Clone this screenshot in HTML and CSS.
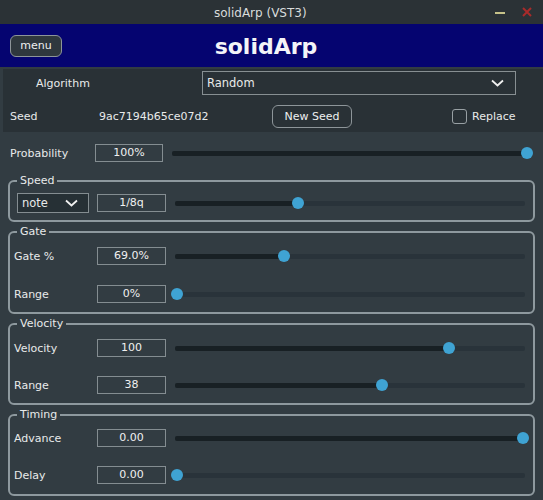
FILE: index.html
```html
<!DOCTYPE html>
<html>
<head>
<meta charset="utf-8">
<link rel="stylesheet" href="styles.css">
</head>
<body>
<div class="window">
  <div class="titlebar">
    <span class="title">solidArp (VST3)</span>
    <div class="winctl">
      <span class="min"></span>
      <svg class="close" width="10" height="10" viewBox="0 0 10 10"><path d="M1 1L9 9M9 1L1 9" stroke="#a82b2b" stroke-width="2" fill="none"/></svg>
    </div>
  </div>
  <div class="header">
    <button class="btn menu">menu</button>
    <div class="appname">solidArp</div>
    <div></div>
  </div>
  <div class="toppanel">
    <div class="algrow">
      <span class="alglabel">Algorithm</span>
      <div class="dropdown">
        <span>Random</span>
        <svg width="13" height="8" viewBox="0 0 13 8"><path d="M1 1.5L6.5 6.5L12 1.5" stroke="#f0f0f0" stroke-width="1.8" fill="none"/></svg>
      </div>
    </div>
    <div class="seedrow">
      <span class="seedlabel">Seed</span>
      <span class="seedhash">9ac7194b65ce07d2</span>
      <button class="btn newseed">New Seed</button>
      <span class="checkbox"></span>
      <span class="checklabel">Replace</span>
    </div>
  </div>
  <div class="main">
    <div class="probrow">
      <span class="problabel">Probability</span>
      <div class="valbox probbox">100%</div>
      <div class="slider probslider" style="--v:1"><div class="fill"></div><div class="thumb"></div></div>
    </div>
    <div class="groups">
      <div class="group speed">
        <span class="legend">Speed</span>
        <div class="row">
          <div class="combo"><span>note</span><svg width="13" height="8" viewBox="0 0 13 8"><path d="M1 1.5L6.5 6.5L12 1.5" stroke="#f0f0f0" stroke-width="1.8" fill="none"/></svg></div>
          <div class="valbox">1/8q</div>
          <div class="slider" style="--v:0.35"><div class="fill"></div><div class="thumb"></div></div>
        </div>
      </div>
      <div class="group gate">
        <span class="legend">Gate</span>
        <div class="row">
          <span class="lbl">Gate %</span>
          <div class="valbox">69.0%</div>
          <div class="slider" style="--v:0.31"><div class="fill"></div><div class="thumb"></div></div>
        </div>
        <div class="row">
          <span class="lbl">Range</span>
          <div class="valbox">0%</div>
          <div class="slider" style="--v:0"><div class="fill"></div><div class="thumb"></div></div>
        </div>
      </div>
      <div class="group vel">
        <span class="legend">Velocity</span>
        <div class="row">
          <span class="lbl">Velocity</span>
          <div class="valbox">100</div>
          <div class="slider" style="--v:0.786"><div class="fill"></div><div class="thumb"></div></div>
        </div>
        <div class="row">
          <span class="lbl">Range</span>
          <div class="valbox">38</div>
          <div class="slider" style="--v:0.592"><div class="fill"></div><div class="thumb"></div></div>
        </div>
      </div>
      <div class="group timing">
        <span class="legend">Timing</span>
        <div class="row">
          <span class="lbl">Advance</span>
          <div class="valbox">0.00</div>
          <div class="slider" style="--v:1"><div class="fill"></div><div class="thumb"></div></div>
        </div>
        <div class="row">
          <span class="lbl">Delay</span>
          <div class="valbox">0.00</div>
          <div class="slider" style="--v:0"><div class="fill"></div><div class="thumb"></div></div>
        </div>
      </div>
    </div>
  </div>
</div>
</body>
</html>
```
FILE: styles.css
```css
html, body {
  margin: 0;
  padding: 0;
  background: #323c42;
}
body {
  font-family: "DejaVu Sans", Verdana, sans-serif;
  font-size: 11px;
  color: #e8eaea;
}
.window {
  width: 543px;
  height: 500px;
  overflow: hidden;
  background: #323c42;
}
.titlebar {
  height: 24px;
  background: #2b3236;
  display: flex;
  align-items: center;
  padding-left: 214px;
  box-sizing: border-box;
}
.title {
  font-size: 12px;
  color: #d9dcdc;
  padding-top: 1px;
}
.winctl {
  margin-left: auto;
  display: flex;
  align-items: center;
  gap: 17px;
  padding-right: 11px;
}
.min {
  display: block;
  width: 10px;
  height: 2px;
  background: #c6c28a;
  margin-top: 2px;
}
.close { display: block; }
.header {
  height: 43px;
  background: #050470;
  display: grid;
  grid-template-columns: 52px 1fr 73px;
  align-items: center;
  padding-left: 10px;
}
.btn {
  font-family: "DejaVu Sans", Verdana, sans-serif;
  font-size: 11px;
  color: #eef0f0;
  border: 1px solid #8d9599;
  border-radius: 6px;
  padding: 0;
  box-sizing: border-box;
}
.menu {
  width: 52px;
  height: 22px;
  background: #2f383e;
}
.appname {
  text-align: center;
  font-size: 22px;
  font-weight: bold;
  color: #f4f4f8;
  padding-top: 2px;
}
.toppanel {
  margin-top: 2px;
  margin-left: 3px;
  height: 63px;
  box-sizing: border-box;
  background: #293136;
  padding-top: 2px;
}
.algrow {
  display: flex;
  align-items: center;
  height: 24px;
}
.alglabel {
  width: 166px;
  padding-left: 33px;
}
.dropdown {
  width: 314px;
  height: 24px;
  box-sizing: border-box;
  border: 1px solid #878f92;
  display: flex;
  align-items: center;
  justify-content: space-between;
  padding: 0 11px 0 4px;
}
.dropdown span { font-size: 11.5px; }
.seedrow {
  display: flex;
  align-items: center;
  height: 23px;
  margin-top: 10px;
  padding-left: 7px;
}
.seedlabel { width: 89px; }
.seedhash { width: 173px; }
.newseed {
  width: 80px;
  height: 23px;
  background: #293136;
}
.checkbox {
  width: 15px;
  height: 15px;
  box-sizing: border-box;
  border: 1px solid #98a0a4;
  border-radius: 3px;
  margin-left: 100px;
}
.checklabel { margin-left: 5px; }
.main {
  padding-top: 12px;
}
.probrow {
  display: flex;
  align-items: center;
  height: 18px;
  padding-left: 10px;
}
.problabel { width: 85px; }
.valbox {
  width: 69px;
  height: 18px;
  box-sizing: border-box;
  border: 1px solid #848d91;
  text-align: center;
  line-height: 16px;
  font-size: 11px;
  color: #f0f0f0;
  flex: none;
}
.probbox { width: 68px; }
.slider {
  position: relative;
  height: 12px;
  flex: 1;
}
.slider::before, .slider .fill {
  content: "";
  position: absolute;
  left: 0;
  top: 3.5px;
  height: 5px;
}
.slider::before {
  right: 0;
  background: #29333a;
  border-radius: 2px;
}
.slider .fill {
  width: calc(2px + var(--v) * (100% - 4px));
  background: #182024;
  border-radius: 2px;
}
.slider .thumb {
  position: absolute;
  top: 0;
  left: calc(2px + var(--v) * (100% - 4px) - 6px);
  width: 12px;
  height: 12px;
  border-radius: 50%;
  background: #3fa3d3;
}
.probslider {
  margin-left: 9px;
  margin-right: 14px;
}
.groups {
  margin-top: 18px;
  display: flex;
  flex-direction: column;
  gap: 9px;
}
.group {
  position: relative;
  margin: 0 8px;
  border: 2px solid #8e999e;
  border-radius: 6px;
  box-sizing: border-box;
  padding: 14px 8px 0 4px;
  display: flex;
  flex-direction: column;
}
.legend {
  position: absolute;
  top: -8px;
  left: 7px;
  padding: 0 3px;
  background: #323c42;
  line-height: 13px;
  font-size: 11px;
}
.group .row {
  display: flex;
  align-items: center;
  height: 18px;
}
.group .slider { margin-left: 9px; }
.lbl { width: 83px; }
.speed { height: 42px; padding-top: 11px; padding-left: 7px; }
.speed .row { height: 20px; }
.speed .valbox { margin-left: 8px; }
.gate { height: 83px; gap: 20px; }
.vel { height: 82px; gap: 19px; }
.timing { height: 82px; gap: 19px; padding-top: 13px; }
.combo {
  width: 72px;
  height: 20px;
  box-sizing: border-box;
  border: 1px solid #848d91;
  background: #263035;
  display: flex;
  align-items: center;
  justify-content: space-between;
  padding: 0 10px 0 4px;
  font-size: 11.5px;
}
```
